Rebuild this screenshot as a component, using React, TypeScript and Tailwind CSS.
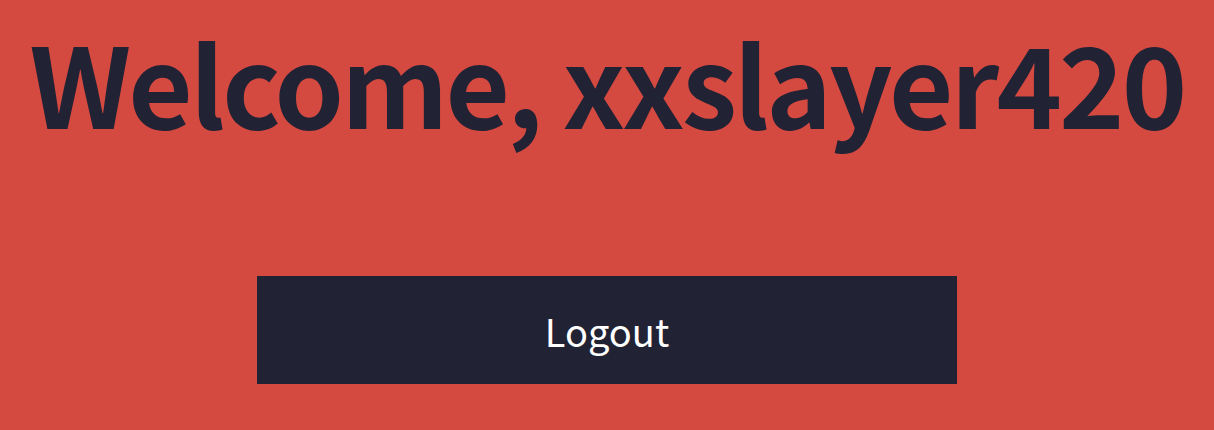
export default function App() {
  return (
    <div
      className="min-h-screen w-full bg-[#d54a40] flex flex-col items-center"
      style={{ fontFamily: '"Noto Sans CJK KR", "Noto Sans", sans-serif' }}
    >
      <h1 className="mt-[11px] whitespace-nowrap text-[111px] leading-[140px] font-semibold tracking-[-2.8px] text-[#222235]">
        Welcome, xxslayer420
      </h1>
      <button className="mt-[125px] w-[700px] h-[108px] bg-[#222235] text-white text-[38px]">
        Logout
      </button>
    </div>
  );
}
